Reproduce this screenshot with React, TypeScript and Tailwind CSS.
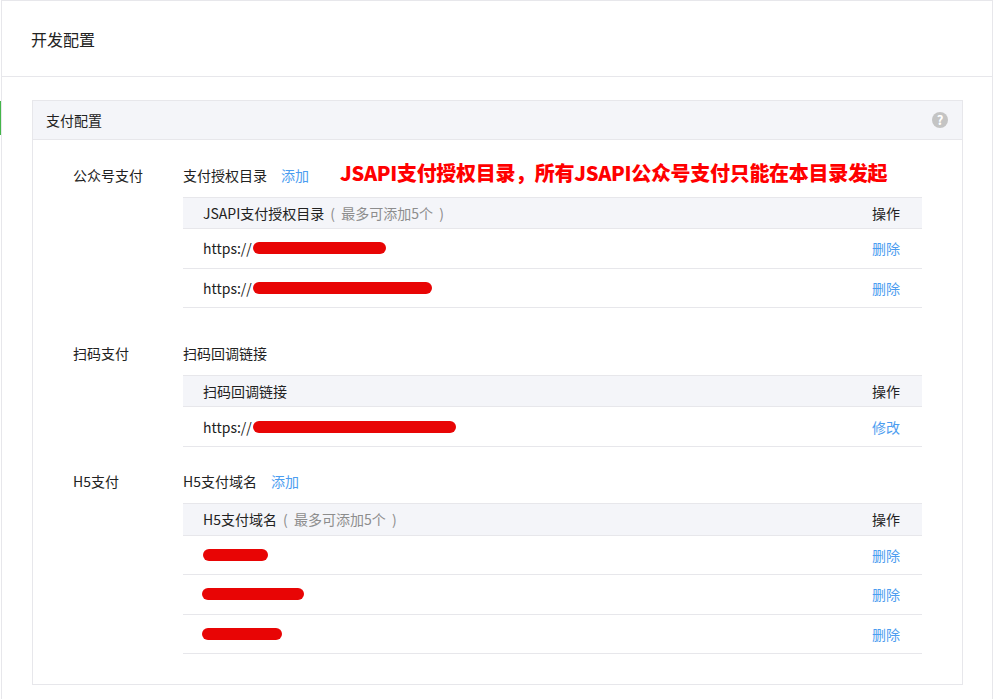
import React from 'react';

const linkClass = "text-[#4c9df0]";

interface Row {
  prefix?: string;
  bar: number;
  barLeft?: number;
  action: string;
  height: string;
}

interface Section {
  label: string;
  title: string;
  addable?: boolean;
  note?: boolean;
  column: string;
  topGap: string;
  headHeight: string;
  rows: Row[];
}

const sections: Section[] = [
  {
    label: "公众号支付",
    title: "支付授权目录",
    addable: true,
    note: true,
    column: "JSAPI支付授权目录",
    topGap: "mt-0",
    headHeight: "h-[32px]",
    rows: [
      { prefix: "https://", bar: 133, action: "删除", height: "h-[40px] pb-[1px]" },
      { prefix: "https://", bar: 179, action: "删除", height: "h-[39px]" },
    ],
  },
  {
    label: "扫码支付",
    title: "扫码回调链接",
    column: "扫码回调链接",
    topGap: "mt-[26px]",
    headHeight: "h-[32px]",
    rows: [{ prefix: "https://", bar: 203, action: "修改", height: "h-[40px]" }],
  },
  {
    label: "H5支付",
    title: "H5支付域名",
    addable: true,
    column: "H5支付域名",
    note: false,
    topGap: "mt-[15px]",
    headHeight: "h-[33px] pb-[1px]",
    rows: [
      { bar: 65, action: "删除", height: "h-[39px]" },
      { bar: 102, barLeft: -1, action: "删除", height: "h-[40px] pb-[1px]" },
      { bar: 80, barLeft: -1, action: "删除", height: "h-[39px]" },
    ],
  },
];

function ConfigSection({ section }: { section: Section }) {
  const showLimit = section.addable;
  return (
    <div className={`flex ${section.topGap}`}>
      <div className="w-[150px] shrink-0 pl-10 h-[41px] pb-[3px] flex items-center">{section.label}</div>
      <div className="flex-1">
        <div className="h-[41px] pb-[3px] flex items-center">
          <span>{section.title}</span>
          {section.addable && <a className={`${linkClass} ml-[14px]`}>添加</a>}
          {section.note && (
            <span className="ml-[31px] -mt-[5px] text-[20px] font-black tracking-[-0.3px] text-[#ff0000] whitespace-nowrap">
              JSAPI支付授权目录，所有JSAPI公众号支付只能在本目录发起
            </span>
          )}
        </div>
        <div className={`${section.headHeight} flex items-center justify-between bg-[#f4f5f9] border-y border-[#e7e7eb] pl-5 pr-[22px]`}>
          <span className="flex items-center">
            {section.column}
            {showLimit && <span className="pl-[6px] text-[#8d8d8d] whitespace-pre">(  最多可添加5个  )</span>}
          </span>
          <span>操作</span>
        </div>
        {section.rows.map((row, index) => (
          <div key={index} className={`${row.height} flex items-center justify-between border-b border-[#e7e7eb] pl-5 pr-[22px]`}>
            <span className="flex items-center">
              {row.prefix && <span className="w-[50px]">{row.prefix}</span>}
              <span
                className="block h-[12px] rounded-full bg-[#e80505]"
                style={{ width: row.bar, marginLeft: row.barLeft ?? 0 }}
              />
            </span>
            <a className={linkClass}>{row.action}</a>
          </div>
        ))}
      </div>
    </div>
  );
}

export default function App() {
  return (
    <div className="relative w-[994px] h-[699px] bg-white overflow-hidden text-[14px] leading-[20px] text-[#222] font-['Noto_Sans_CJK_SC','Liberation_Sans',sans-serif]">
      <div className="absolute left-0 top-[101px] w-[1px] h-[34px] bg-[#44b549]" />
      <div className="ml-[1px] mr-[1px] h-[699px] border-x border-t border-[#e7e7eb]">
        <div className="h-[76px] flex items-center pl-[29px] text-[16px] border-b border-[#e7e7eb]">开发配置</div>
        <div className="mt-[23px] ml-[30px] mr-[29px] h-[585px] border border-[#e7e7eb]">
          <div className="h-[39px] flex items-center justify-between pl-[13px] pr-[14px] bg-[#f4f5f9] border-b border-[#e7e7eb]">
            <span>支付配置</span>
            <span className="w-4 h-4 rounded-full bg-[#c4c4c4] flex items-center justify-center text-white text-[13px] font-bold">?</span>
          </div>
          <div className="pt-4 pr-10">
            {sections.map((section) => (
              <ConfigSection key={section.label} section={section} />
            ))}
          </div>
        </div>
      </div>
    </div>
  );
}
